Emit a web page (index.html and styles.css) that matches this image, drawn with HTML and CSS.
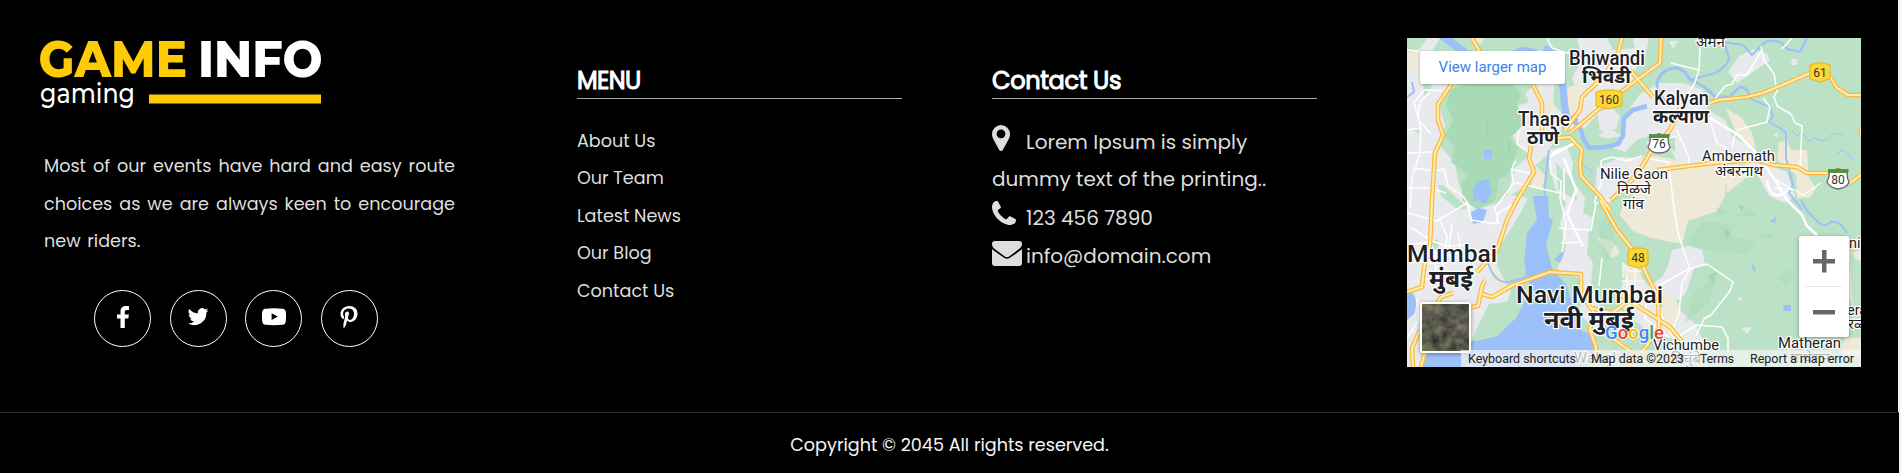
FILE: index.html
```html
<!DOCTYPE html>
<html lang="en">
<head>
<meta charset="utf-8">
<title>Game Info</title>
<link rel="stylesheet" href="styles.css">
</head>
<body>
<div class="page">
<footer class="footer">
  <section class="about">
    <svg class="logo" viewBox="0 0 290 80" role="img" aria-label="Game Info gaming">
      <text class="logo-main gold" x="-1.500" y="45.500" textLength="148.500" lengthAdjust="spacingAndGlyphs">GAME</text>
      <text class="logo-main" x="158" y="45.500" textLength="124.500" lengthAdjust="spacingAndGlyphs">INFO</text>
      <text class="logo-sub" x="0" y="72" textLength="95" lengthAdjust="spacingAndGlyphs">gaming</text>
      <rect x="109" y="63.5" width="172" height="9" fill="#ffcb05"/>
    </svg>
    <p class="blurb">Most of our events have hard and easy route choices as we are always keen to encourage new riders.</p>
    <div class="social">
      <a class="circle"><svg viewBox="0 0 24 24"><path d="M18 1.2v3.7h-2.2c-1.7 0-2 .8-2 2v2.6h4.1l-.6 4.1h-3.5V23H9.500V13.600H6V9.500h3.500V6.400C9.500 2.900 11.700 1 14.900 1c1.500 0 2.800.1 3.100.2z"/></svg></a>
      <a class="circle"><svg viewBox="0 0 24 24"><path d="M22.500 5.200a9 9 0 0 1-2.400.7 4.200 4.200 0 0 0 1.800-2.300 8.400 8.400 0 0 1-2.700 1A4.200 4.200 0 0 0 12 8.500 12 12 0 0 1 3.300 4a4.200 4.200 0 0 0 1.300 5.700 4.200 4.200 0 0 1-1.900-.5c0 2 1.400 3.800 3.400 4.200a4.200 4.200 0 0 1-1.900.1 4.200 4.200 0 0 0 4 2.900A8.500 8.500 0 0 1 2 18.200a12 12 0 0 0 18.400-10.700 8.600 8.600 0 0 0 2.100-2.300z"/></svg></a>
      <a class="circle"><svg viewBox="0 0 24 24"><path fill-rule="evenodd" d="M3.500 3.800Q12 2.900 20.500 3.800 23.500 4 23.800 7q.5 4.500 0 9-.3 3.500-3.300 3.800-8.500.9-17 0-3-.3-3.300-3.800-.5-4.500 0-9 .3-3 3.300-3.200zM9.600 8.300v6.600l6.200-3.300z"/></svg></a>
      <a class="circle"><svg viewBox="0 0 24 24"><path d="M12.400 1C7 1 3.500 4.700 3.500 8.900c0 2 1 4.400 2.700 5.200.4.200.5 0 .6-.3l.4-1.600c0-.2 0-.3-.1-.5-.6-.7-1-1.700-1-2.800 0-2.900 2.200-5.400 5.600-5.400 3.300 0 5.300 2.200 5.300 5 0 3.800-1.900 6.400-4.200 6.400-1.300 0-2.200-1.100-1.900-2.300.4-1.600 1.100-3.200 1.100-4.400 0-2.600-4.100-2.200-4.100 1.400 0 1.100.4 1.900.4 1.900L6.600 18c-.4 1.700-.1 4.200 0 5.100h.4c.6-.7 1.800-2.600 2.200-4.200l.9-3.500c.6.9 1.900 1.500 3.200 1.500 4.200 0 7.200-3.800 7.200-8.500C20.500 3.900 16.900 1 12.400 1z"/></svg></a>
    </div>
  </section>

  <nav class="menu">
    <h3 class="menu-title">MENU</h3>
    <ul class="links">
      <li>About Us</li><li>Our Team</li><li>Latest News</li><li>Our Blog</li><li>Contact Us</li>
    </ul>
  </nav>

  <section class="contact">
    <h3 class="contact-title">Contact Us</h3>
    <div class="contact-row address">
      <svg class="pin" viewBox="0 0 18 26"><path fill-rule="evenodd" d="M9 0a9 9 0 0 1 9 9c0 2.500-.8 3.800-1.500 5.500L10.800 25q-1.800 2-3.600 0L1.500 14.500C.8 12.800 0 11.500 0 9a9 9 0 0 1 9-9zm0 4.500a4.400 4.400 0 1 0 0 8.800 4.400 4.400 0 0 0 0-8.800z"/></svg><span>Lorem Ipsum is simply</span><br><span>dummy text of the printing..</span>
    </div>
    <div class="contact-row">
      <svg class="phone" viewBox="0 0 24 24"><path d="M24 18.800c0 1-.5 2.800-1 3.300-1 1-3 1.900-4.700 1.900C9.500 24 0 14 0 6 0 4.200.8 1.800 1.900.9 2.700.3 4.400 0 5.200 0c.5 0 .8.400 1 .8l2.600 5c.4.8-.2 1.300-.8 1.800-.8.700-2.200 1.300-2.200 2.200 0 2.200 6.300 8.400 8.400 8.400.9 0 1.600-1.500 2.300-2.200.5-.6 1-1.100 1.800-.7l4.900 2.600c.4.200.8.500.8.900z"/></svg><span>123 456 7890</span>
    </div>
    <div class="contact-row">
      <svg class="mail" viewBox="0 0 30 25"><path d="M0 3Q0 0 3 0h24q3 0 3 3c0 2-1 3.400-2.700 4.700L17.500 15.300Q15 17 12.500 15.300L2.700 8C1 6.600 0 5.200 0 3zM0 8q.6.700 1.400 1.300L12 16.800q3 2 6 0L28.600 9.300Q29.400 8.700 30 8v14q0 3-3 3H3q-3 0-3-3z"/></svg><span>info@domain.com</span>
    </div>
  </section>

  <section class="map">
    <svg class="map-art" viewBox="0 0 454 329">
      <rect width="454" height="329" fill="#bbe2c6"/>
      <g fill="#e8eaed">
        <path d="M20 0H33L26 12H12zM0 14L18 12 60 18 62 38 38 54 32 66 38 88 33 108 48 125 52 148 70 171 92 165 100 157 108 130 125 115 112 108 104 95 108 80 104 70 122 64 118 55 130 45 125 12 134 12 140 30 148 40 146 66 155 76 154 92 150 98 142 112 139 118 128 128 124 145 104 157 121 160 112 178 96 203 90 209 90 228 104 254 100 264 82 266 70 290 62 310 0 329z"/>
        <path d="M170 0H200L206 12 228 10 226 0H242L238 20 226 34 230 46 210 54 196 70 178 90 162 92 172 60 165 40 175 22z"/>
        <path d="M140 112L160 108 166 125 164 140 178 160 176 175 186 180 182 192 180 216 186 225 184 245 191 260 196 275 190 292 174 278 172 240 150 231 159 209 153 185 159 165 148 150 143 130z"/>
        <path d="M233 56L252 45 276 45 296 52 301 72 318 82 325 98 346 110 350 122 380 134 388 158 378 165 362 158 348 132 325 120 288 126 270 124 260 104 240 96 222 80 224 68zM190 74L205 70 213 78 209 91 193 93z"/>
        <path d="M332 18L347 11 360 16 363 22 346 34 330 45 321 34zM197 101L205 91 215 98zM218 78l20-8 14 10-4 16-18 6-12 12-12-4 12-14zM190 130L213 119 236 120 230 138 214 148 202 165 188 152z"/>
        <path d="M265 212L282 208 295 212 298 226 287 230 279 255 272 262 258 258 240 250 256 238 262 225zM216 242L235 242 249 255 254 275 240 290 222 280 212 262z"/>
        <path d="M265 265L289 287 296 303 278 315 264 300 240 295 228 280zM446 215l8-4v12l-6-2zM385 21h5v6h-6zM283 60h12v10h-12zM262 3l9 0-5 8zM390 155l12 5 3-8zM0 296l13-13v46H0zM335 290l10-1-5 7zM330 260l5-1-1 5z"/>
        <path d="M191 98l14-12-4 14zM215 80l8-4-2 10zM172 16l14-6-4 12zM366 98l5-4 0 5z"/>
      </g>
      <g fill="#efe9d8">
        <path d="M0 14L18 13 15 30 0 33zM58 20l16-1v8zM62 0h15l-3 6zM139 61l8 4-5 25-4-2zM129 128l9 9-3 15-11-3z"/>
        <path d="M237 118L250 118 288 126 345 123 320 130 318 158 310 173 281 183 275 206 244 200 226 193 213 177 216 166 226 160 223 132z"/>
        <path d="M319 70L335 80 345 95 349 110 330 98zM370 122L372 104 380 102 384 112 400 112 402 140 409 150 404 159 390 160 389 137zM256 255L268 260 274 272 262 300 256 285zM190 200L206 203 213 215 205 220zM216 228l12-6 8 20h-18zM86 226l15 24-5 2-12-12zM160 50l14-6-2 28-10 8zM442 200l4 70-7-20zM437 300h17v20l-20-5z"/>
        <path d="M318 128L349 127 349 132 320 155z"/>
      </g>
      <g fill="#a8dab5">
        <path d="M44 51L60 46 105 46 114 56 110 67 118 85 103 100 111 110 101 137 92 141 88 163 70 171 56 163 54 145 62 137 44 124 48 109 38 98 46 82 39 67z"/>
      </g>
      <g fill="#a8dab5" opacity=".45">
        <path d="M281 205L295 183 330 187 320 196 350 205 340 216 300 212zM328 178l14-8 8 8zM278 285l9-30 24-19-10 30zM350 199l12-4 6 6zM310 170l10 3-8 8zM192 186l10-10 6 30-8 20-6-16zM371 240l12-10 6 10-10 8z"/>
      </g>
      <g fill="#9ed0ab" opacity=".7"><path d="M316 190l8 4-5 8zM331 168l6 0-2 6zM300 238l10-4-4 10zM392 216l5 4-3 6zM78 84l4-2-2 18zM100 108l4-4v12z"/></g>
      <g fill="#bbe2c6">
        <path d="M15 34l11-8 5 13-14 20zM31 147l5 0 26 24-12 0-16-13zM149 125l18 18 3 20-19-12zM272 0h12v10h-8zM236 305l20 10-15 12zM26 203l5-2 1 12-6-1zM6 92l5-3 1 7zM258 96l10 4 0 14-8-6z"/>
      </g>
      <g fill="#9cc0f9">
        <path d="M126 158L141 158 142 180 146 182 139 207 145 230 160 248 166 270 174 292 188 299 186 317 174 329H16L22 310 64 303 69 303 90 298 109 278 124 252 117 224 120 195 130 182z"/>
        <path d="M104 14Q116 5 130 12L134 14z"/><path d="M0 255L5 254Q12 263 7 276L0 282zM32 0H45L62 13H49zM77 112h8v9h-8zM66 149l7-6 8-2 4 13-7 12-7-4-5 2zM64 174l8-4 8 2-4 12-10 2z"/>
        <path d="M363 183l6-4-1 6zM343 223l6 9-2 2zM376 267l8 0v6h-7z"/>
      </g>
      <path fill="#bbe2c6" d="M69 303L76 280 90 270 106 262 124 252 109 280 90 298z"/>
      <g fill="none" stroke="#9cc0f9" stroke-linejoin="round">
        <path stroke-width="7" d="M137 10Q151 15 154 35T157 64L160 80 170 84"/>
        <path stroke-width="4.500" d="M166 82Q175 90 176 100L182 110 199 109 211 106 216 98 217 80 226 72 240 68"/>
        <path stroke-width="3" d="M263 68Q254 60 250 50 249 40 258 33 274 24 283 42"/>
        <path stroke-width="2.200" d="M283 42L308 35Q320 29 322 20L317 4 336 7 345 17 358 4M358 4Q374 0 380 11L393 14 400 0"/>
        <path stroke-width="2.500" d="M283 42Q300 48 307 58L322 59 333 49Q341 49 344 61"/>
        <path stroke-width="1.800" d="M344 61L363 69 366 78 362 84 373 90 379 95V120L386 147 382 155 395 171"/>
        <path stroke-width="2" d="M142 112Q138 140 137 170M0 59l7-5-2-10M81 225Q88 246 102 244L119 239 121 220M394 162L401 174 412 185Q420 190 423 184 432 181 440 195"/>
        <path stroke-width="1" d="M385 93l5 5 4-4 8 9 6-3 6 3 7-2 5-6 10 2M174 118q2 14 7 12l5 5M430 115l7-3 10 10"/>
      </g>
      <g fill="none" stroke="#fff" stroke-width="1.500" stroke-linejoin="round">
        <path d="M0 92L14 90 13 115 5 140 3 170M23 55Q9 62 12 83L24 96M5 130L28 133 37 131 41 148 56 158 64 170M0 115L25 114M0 150h24L39 155M14 90L7 65 17 52 35 53M5 190L25 203 40 208 60 207M0 175L30 183 60 165 64 182M90 176L105 167M32 180l8 18-3 20 17-3-3-20M0 207l22-3 15 24M64 182l25 4 3-10M0 12L12 13M140 0L145 10 160 15 170 12"/>
        <path d="M109 123Q102 132 107 145L88 170 92 186M112 92L110 106 125 117M143 122L144 136 154 143 153 160 159 185 155 215M170 105L145 115M157 130V162M194 122L195 142 187 165M195 122l10-3 15 4 15-5M125 136L104 131M109 145L153 155M152 190L184 192 189 165 202 162M154 205l20-1M195 220L192 248M175 140l-4-14"/>
        <path d="M0 300L12 282 10 260M14 240L52 246M28 215L29 240M17 226L41 224M5 215h20M45 185l-3 25"/>
        <path d="M264 25L292 32 293 10M292 32L287 47 273 65M304 66L318 48 325 46 330 37 340 37 355 12M354 8L357 22 367 36 370 53 367 59 370 68 384 76 388 85 395 88 393 130M330 92L345 88 360 84 363 69 356 60M270 92L282 120 281 129M303 82L310 105 319 110M325 110l3-14M262 129L267 170 271 195 283 231 275 245 272 275 266 290M251 248L282 231 300 226 326 244 323 253 304 277 297 281 289 298M240 120l23 5M366 140l20 12M385 0L375 11M270 98L240 105"/>
        <path stroke-width="2.600" d="M303 80L330 96 347 112 368 142 380 162 395 177 400 188 410 197M360 142Q363 165 380 153M157 120L169 152 160 176 176 208M167 105L143 119"/>
        <path stroke-width="1.600" d="M240 255L238 280 263 300M250 268L267 301 290 287 315 289 321 300V315"/>
        <path stroke-width="1.100" d="M216 240V225L222 233H235M220 236V250M228 230V250M214 243H238M366 150L388 152 396 157 410 148 413 145"/>
      </g>
      <g fill="#9cc0f9"><path d="M147 222l7-7 4-2-5 12z"/></g>
      <defs>
        <g id="roads" fill="none" stroke-linejoin="round">
          <path d="M65 0L72 12 50 38 31 66 31 82 36 97 28 115 25 162 23 208 17 230 15 249 0 254M126 47L135 65V93M124 108L122 120 127 134 110 162 100 182 90 212 70 234M46 255L34 259 26 272M13 292L5 310 6 329M19 310L14 329"/>
          <path d="M151 100L163 99 175 112 173 125 174 138 193 158 203 172M193 162L210 192 226 212M236 229L251 259 252 290 238 310 220 329M158 92L173 72 175 59 193 42 210 19 215 0M163 95L193 70 223 47 253 25 254 0M223 32L246 59"/>
          <path d="M64 269L71 268 75 248 78 242M75 256L85 259 106 247 143 234 174 236 174 256 186 273 183 292 189 309 188 329M184 270L205 275 223 262"/>
          <path d="M303 65L311 62 340 59 356 55 380 45 403 35M423 39L430 50 441 57 454 57M273 70L263 92 243 115 233 132 223 144 204 162M250 132L306 125 350 122 366 127 390 129 400 135 420 135M443 145L454 137M454 90V98M215 258L263 289 296 329M205 300L240 325"/>
        </g>
      </defs>
      <use href="#roads" stroke="#f9b93e" stroke-width="4.600"/>
      <use href="#roads" stroke="#ffecae" stroke-width="2.200"/>
      <g class="shield">
        <path d="M189 54q4-1 8-2h10q4 1 8 2v14q-6 1-13 3-7-2-13-3zM403 27q4-1 7-2h7q3 1 6 2v14q-5 1-10 3-5-2-10-3zM221 212q4-1 7-2h7q3 1 6 2v15q-5 1-10 3-5-2-10-3z" fill="#fdd835" stroke="#e5b319"/>
        <path d="M243 97h19q-2 7 1 12-2 6-11 6-8 0-11-6 3-5 2-12zM422 132h19q-2 7 1 12-2 6-11 7-8-1-11-7 3-5 2-12z" fill="#fff" stroke="#666" stroke-width="1.300"/>
        <path d="M242 96l4 1 6-2 6 2 4-1v4h-20zM421 131l4 1 6-2 6 2 4-1v4h-20z" fill="#53913b"/>
        <text x="202" y="66">160</text><text x="413" y="39">61</text><text x="231" y="224">48</text><text x="252" y="110">76</text><text x="431" y="146">80</text>
      </g>
      <g class="city">
        <text x="162" y="27" textLength="76" lengthAdjust="spacingAndGlyphs" font-size="19.500">Bhiwandi</text><text class="hindi" x="175" y="45" textLength="49" lengthAdjust="spacingAndGlyphs" font-size="19">भिवंडी</text>
        <text x="111" y="88" textLength="52" lengthAdjust="spacingAndGlyphs" font-size="19.500">Thane</text><text class="hindi" x="120" y="106" textLength="32" lengthAdjust="spacingAndGlyphs" font-size="19">ठाणे</text>
        <text x="247" y="67" textLength="55" lengthAdjust="spacingAndGlyphs" font-size="19.500">Kalyan</text><text class="hindi" x="246" y="85" textLength="56" lengthAdjust="spacingAndGlyphs" font-size="19">कल्याण</text>
        <text x="0" y="224" textLength="90" lengthAdjust="spacingAndGlyphs" font-size="24.500">Mumbai</text><text class="hindi" x="22" y="249" textLength="44" lengthAdjust="spacingAndGlyphs" font-size="24">मुंबई</text>
        <text x="109" y="265" textLength="147" lengthAdjust="spacingAndGlyphs" font-size="24.500">Navi Mumbai</text><text class="hindi" x="137" y="290" textLength="90" lengthAdjust="spacingAndGlyphs" font-size="24">नवी मुंबई</text>
      </g>
      <g class="town">
        <text x="289" y="9" textLength="29" lengthAdjust="spacingAndGlyphs">अमन</text>
        <text x="193" y="141" textLength="68" lengthAdjust="spacingAndGlyphs">Nilie Gaon</text><text x="210" y="156" textLength="34" lengthAdjust="spacingAndGlyphs">निळजे</text><text x="216" y="171" textLength="21" lengthAdjust="spacingAndGlyphs">गांव</text>
        <text x="295" y="123" textLength="73" lengthAdjust="spacingAndGlyphs">Ambernath</text><text x="308" y="138" textLength="48" lengthAdjust="spacingAndGlyphs">अंबरनाथ</text>
        <text x="246" y="312" textLength="66" lengthAdjust="spacingAndGlyphs">Vichumbe</text><text x="264" y="326" textLength="30" lengthAdjust="spacingAndGlyphs">विचुंबे</text>
        <text x="371" y="310" textLength="63" lengthAdjust="spacingAndGlyphs">Matheran</text><text x="383" y="325" textLength="40" lengthAdjust="spacingAndGlyphs">माथेरान</text>
        <text x="167" y="325" textLength="42">Wahal</text><text x="442" y="210">ni</text><text x="430" y="224">नी</text><text x="440" y="277">era</text><text x="441" y="291">रळ</text>
      </g>
      <text class="google" x="198" y="301" textLength="59" lengthAdjust="spacingAndGlyphs"><tspan fill="#4285f4">G</tspan><tspan fill="#ea4335">o</tspan><tspan fill="#fbbc04">o</tspan><tspan fill="#4285f4">g</tspan><tspan fill="#34a853">l</tspan><tspan fill="#ea4335">e</tspan></text>
    </svg>
    <a class="larger">View larger map</a>
    <div class="zoom"><svg viewBox="0 0 50 101"><path d="M14 23h9V14h4.500v9H36v4.500h-8.500v9H23v-9H14zM14 74h22v4.500H14z" fill="#666"/><path d="M6 50h37v1H6z" fill="#e6e6e6"/></svg></div>
    <svg class="thumb" viewBox="0 0 47 47">
      <defs><filter id="ground" x="0" y="0" width="1" height="1" color-interpolation-filters="sRGB"><feTurbulence type="fractalNoise" baseFrequency=".1" numOctaves="4" seed="8"/><feColorMatrix values=".5 0 0 0 .1  .4 .08 0 0 .11  .35 0 .08 0 .08  0 0 0 0 1"/></filter></defs>
      <rect width="47" height="47" fill="#56564a" filter="url(#ground)"/>
    </svg>
    <svg class="credits" viewBox="0 0 400 17">
      <rect width="400" height="17" fill="#f5f5f5" fill-opacity=".7"/><path d="M120.500 0v17M228.500 0v17M282.500 0v17" stroke="#e2ece4"/>
      <text x="7" y="13" textLength="108" lengthAdjust="spacingAndGlyphs">Keyboard shortcuts</text><text x="130" y="13" textLength="93" lengthAdjust="spacingAndGlyphs">Map data ©2023</text><text x="239" y="13" textLength="34" lengthAdjust="spacingAndGlyphs">Terms</text><text x="289" y="13" textLength="104" lengthAdjust="spacingAndGlyphs">Report a map error</text>
    </svg>
  </section>
</footer>
<div class="copyright">Copyright © 2045 All rights reserved.</div>
</div>
</body>
</html>
```
FILE: styles.css
```css
* { box-sizing: border-box; }
body { margin: 0; background: #f3f3f3; font-family: Poppins, Inter, "Noto Sans", sans-serif; color: #dedede; }
.page { height: 473px; overflow: hidden; }
.footer { width: 1898px; height: 412px; background: #000; display: grid; grid-template-columns: 577px 415px 415px 454px; }
.about { padding: 31px 0 0 40px; }
.logo { display: block; width: 290px; height: 80px; overflow: visible; }
.logo-main { font: 800 51px Montserrat, Inter, sans-serif; fill: #fff; }
.gold { fill: #ffcb05; }
.logo-sub { font: 500 27px Montserrat, Inter, sans-serif; fill: #fff; }
.blurb { width: 411px; margin: 37px 0 0 4px; font-size: 17.6px; line-height: 37.5px; text-align: justify; word-spacing: 2px; }
.social { display: flex; gap: 18.6px; margin: 29.5px 0 0 54px; }
.circle { width: 57px; height: 57px; border: 1px solid #fff; border-radius: 50%; display: flex; align-items: center; justify-content: center; padding-bottom: 4px; }
.circle svg { width: 24px; height: 24px; fill: #fff; }
h3 { width: 325px; height: 37px; margin: 62px 0 0; border-bottom: 1px solid #aaa; font-size: 24px; line-height: 37.5px; font-weight: 400; color: #fff; -webkit-text-stroke: 1px #fff; }
.menu-title { letter-spacing: -.6px; }
.contact-title { letter-spacing: -.35px; }
.links { list-style: none; margin: 23.6px 0 0; padding: 0; font-size: 17.6px; line-height: 37.5px; }
.contact { font-size: 20px; }
.contact-row { line-height: 38px; white-space: nowrap; height: 38px; }
.contact-row svg { fill: #dedede; }
.address { height: 75px; margin-top: 25px; line-height: 37.4px; }
.pin { width: 18px; height: 26px; margin-right: 16px; vertical-align: -2px; }
.phone { width: 24px; height: 24px; margin-right: 10px; }
.mail { width: 30px; height: 25px; margin-right: 4px; vertical-align: -3px; }
.map { position: relative; width: 454px; height: 329px; margin-top: 38px; overflow: hidden; font-family: Roboto, "Noto Sans", sans-serif; }
.map-art { display: block; width: 454px; height: 329px; }
.city, .town { fill: #202124; stroke: #fff; stroke-width: 2.5px; stroke-linejoin: round; paint-order: stroke; }
.city { font-weight: 500; }
.hindi { font-weight: 700; }
.town { font-size: 14.5px; }
.shield text { font-size: 12px; text-anchor: middle; fill: #333; }
.google { font: 500 19px Roboto, sans-serif; paint-order: stroke; stroke: #fff; stroke-width: 1.5px; }
.larger { position: absolute; left: 13px; top: 13px; width: 145px; height: 33px; background: #fff; border-radius: 2px; box-shadow: 0 1px 3px #0004; font-size: 15px; line-height: 32px; text-align: center; color: #3b82e8; }
.zoom { position: absolute; left: 392px; top: 198px; width: 50px; height: 101px; background: #fff; border-radius: 2px; box-shadow: 0 1px 4px #0005; }
.zoom svg { display: block; }
.thumb { position: absolute; left: 13px; top: 264px; width: 51px; height: 51px; border: 2px solid #fff; border-radius: 3px; box-shadow: 0 1px 4px #0006; }
.credits { position: absolute; left: 54px; top: 312px; width: 400px; height: 17px; font-size: 12.5px; fill: #222; }
.copyright { width: 1899px; height: 61px; background: #000; border-top: 1px solid #2b2b2b; text-align: center; font-size: 17.6px; line-height: 64px; color: #f5f5f5; }
```
